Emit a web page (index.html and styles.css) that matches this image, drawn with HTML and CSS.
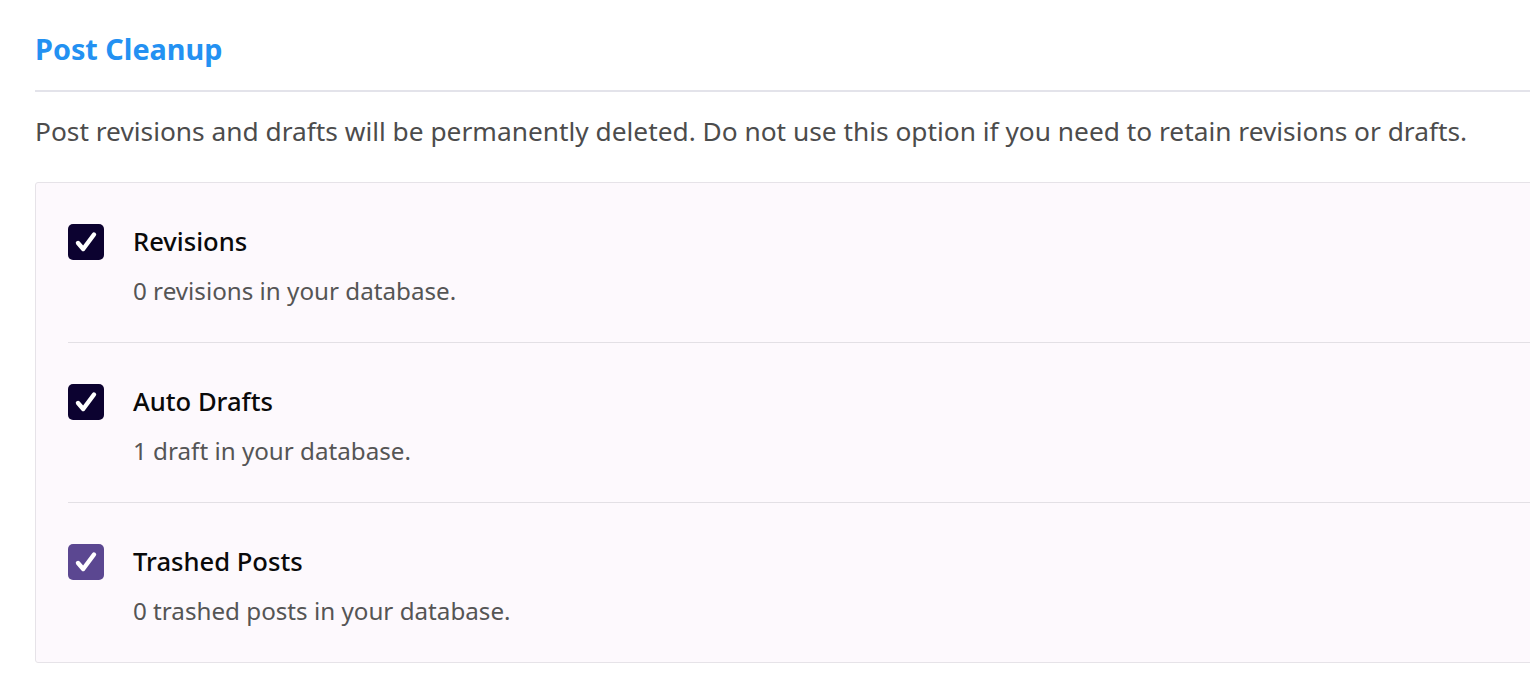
FILE: index.html
```html
<!DOCTYPE html>
<html>
<head>
<meta charset="utf-8">
<link rel="stylesheet" href="styles.css">
</head>
<body>
<div class="page">
  <h2 class="heading">Post Cleanup</h2>
  <p class="intro">Post revisions and drafts will be permanently deleted. Do not use this option if you need to retain revisions or drafts.</p>
  <div class="box">
    <div class="row">
      <span class="check dark"><svg viewBox="0 0 36 36" width="36" height="36"><path d="M10 19 L15.2 25 L26 10.5" fill="none" stroke="#fff" stroke-width="4.4" stroke-linecap="round" stroke-linejoin="round"/></svg></span>
      <div class="text">
        <div class="title">Revisions</div>
        <div class="desc">0 revisions in your database.</div>
      </div>
    </div>
    <div class="row">
      <span class="check dark"><svg viewBox="0 0 36 36" width="36" height="36"><path d="M10 19 L15.2 25 L26 10.5" fill="none" stroke="#fff" stroke-width="4.4" stroke-linecap="round" stroke-linejoin="round"/></svg></span>
      <div class="text">
        <div class="title">Auto Drafts</div>
        <div class="desc">1 draft in your database.</div>
      </div>
    </div>
    <div class="row">
      <span class="check purple"><svg viewBox="0 0 36 36" width="36" height="36"><path d="M10 19 L15.2 25 L26 10.5" fill="none" stroke="#fff" stroke-width="4.4" stroke-linecap="round" stroke-linejoin="round"/></svg></span>
      <div class="text">
        <div class="title">Trashed Posts</div>
        <div class="desc">0 trashed posts in your database.</div>
      </div>
    </div>
  </div>
</div>
</body>
</html>
```
FILE: styles.css
```css
html, body {
  margin: 0;
  padding: 0;
  background: #fff;
  overflow: hidden;
}
body {
  font-family: "Noto Sans", "Open Sans", sans-serif;
  color: #1a1a1a;
}
.page {
  padding: 0 0 0 35px;
  width: 1560px;
}
.heading {
  margin: 0;
  padding-top: 29px;
  padding-bottom: 21px;
  font-size: 28.8px;
  line-height: 40px;
  font-weight: 700;
  color: #2391f2;
  border-bottom: 2px solid #e3e3ea;
}
.intro {
  margin: 19px 0 0;
  font-size: 26.3px;
  line-height: 40px;
  color: #4c4c4c;
}
.box {
  margin-top: 31px;
  background: #fdf9fd;
  border: 1px solid #e6e3e8;
  border-radius: 3px;
  padding: 0 0 0 32px;
}
.row {
  display: flex;
  gap: 29px;
  padding: 41px 0 35px;
  border-bottom: 1px solid #e3e0e5;
}
.row:last-child {
  border-bottom: none;
}
.check {
  width: 36px;
  height: 36px;
  border-radius: 5px;
  flex: none;
  display: block;
}
.check svg { display: block; }
.check.dark { background: #0c0230; }
.check.purple { background: #5b4791; }
.title {
  font-size: 25.6px;
  line-height: 36px;
  font-weight: 500;
  color: #0a0a0a;
}
.desc {
  margin-top: 15px;
  font-size: 24.2px;
  line-height: 32px;
  color: #555;
}
```
